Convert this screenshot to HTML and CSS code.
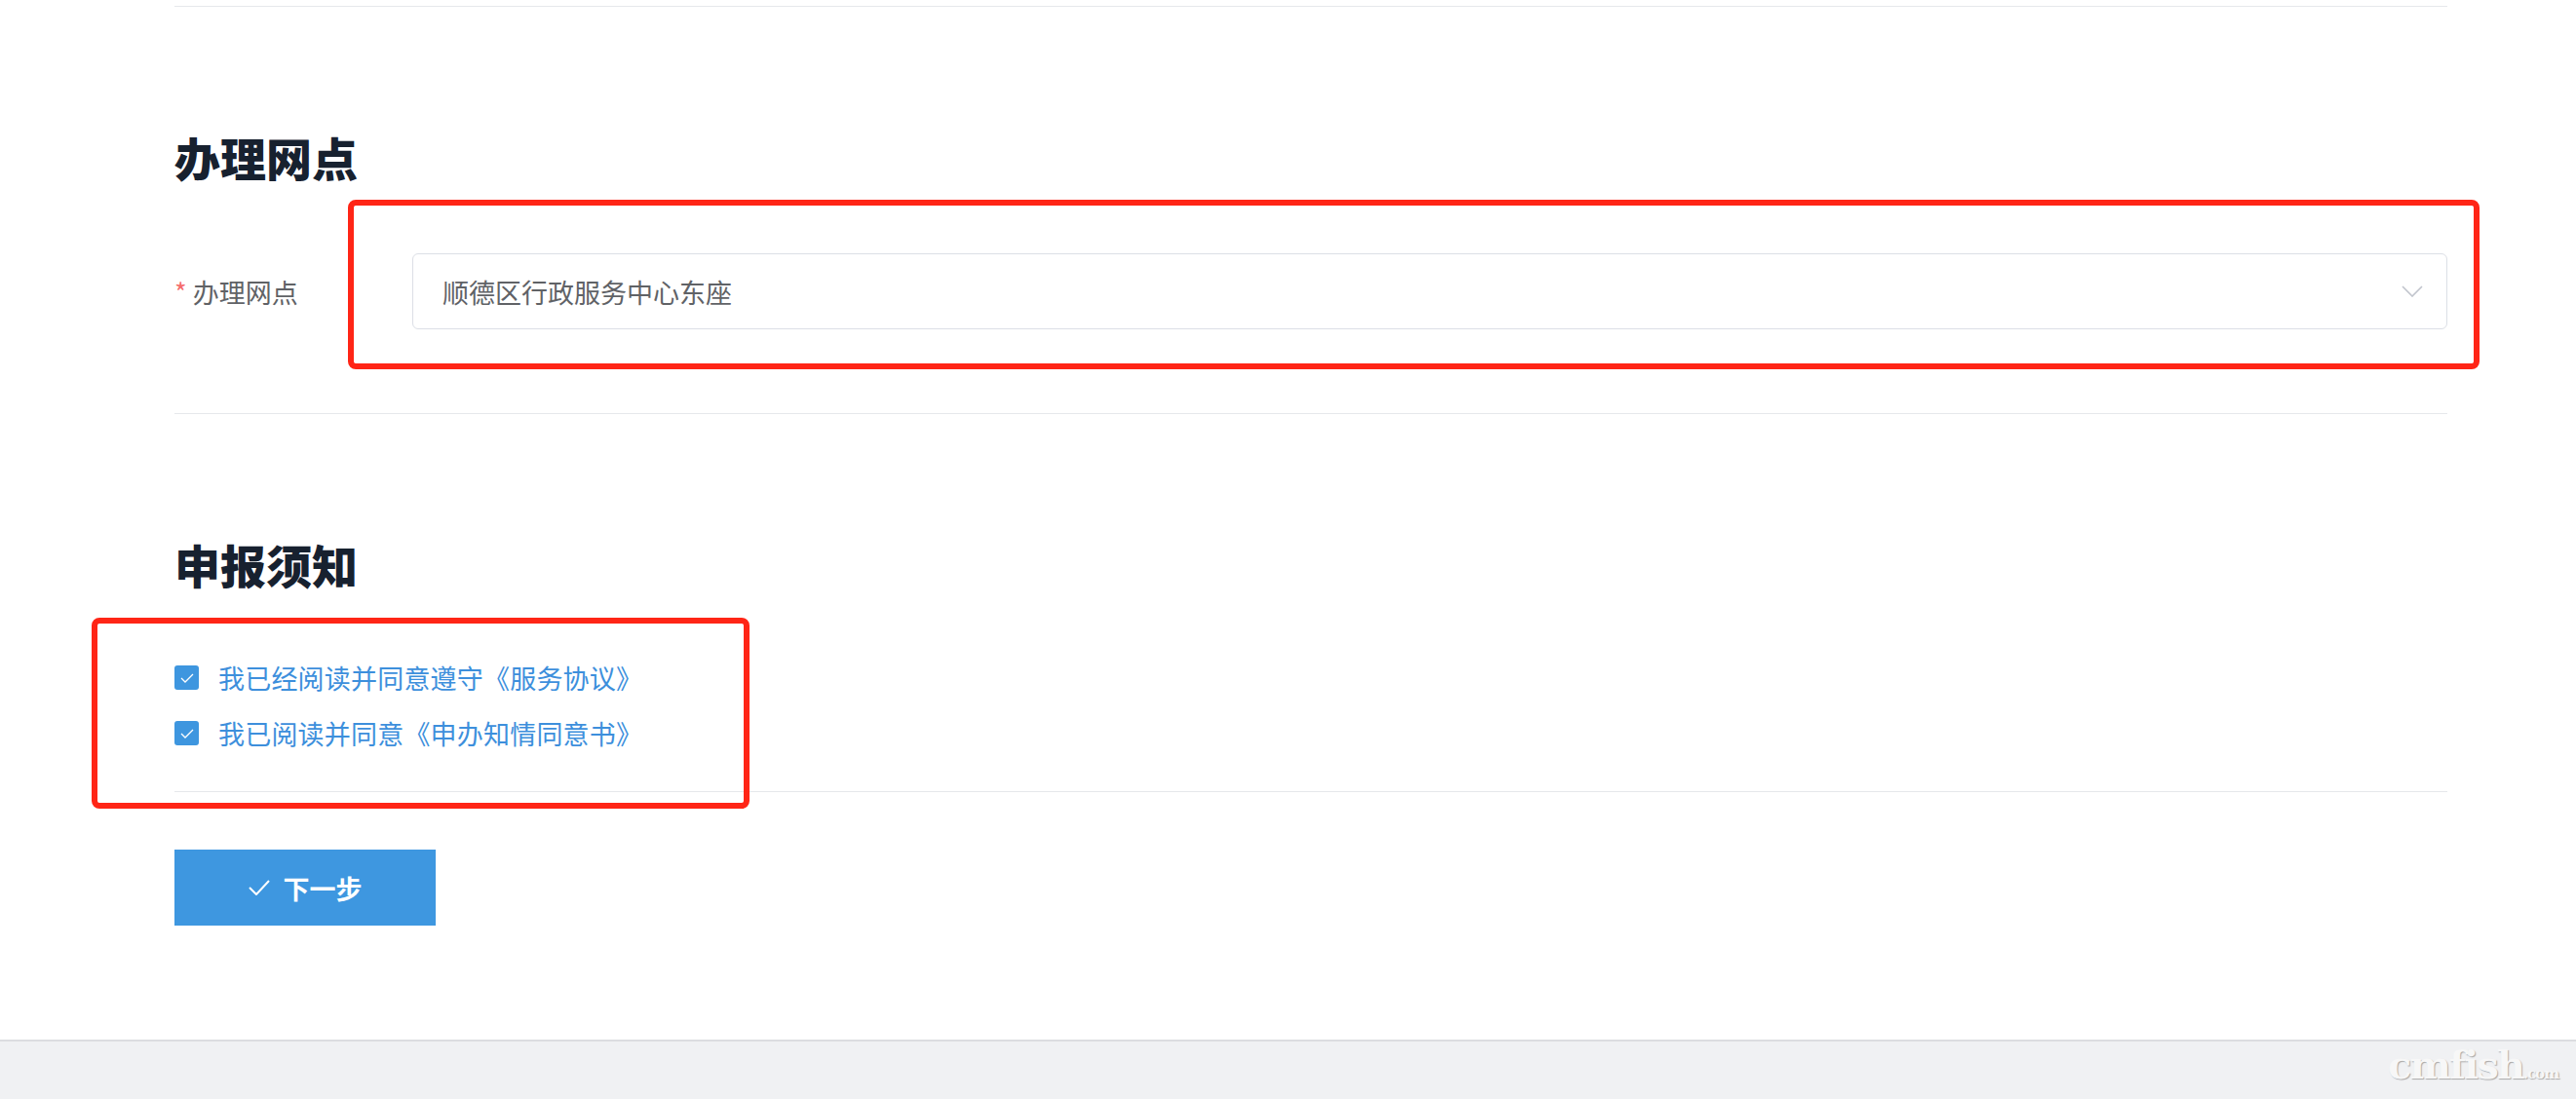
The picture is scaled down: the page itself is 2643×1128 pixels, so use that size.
FILE: index.html
```html
<!DOCTYPE html>
<html lang="zh-CN">
<head>
  <meta charset="UTF-8" />
  <title>办理网点</title>
  <link rel="stylesheet" href="styles.css">
</head>
<body>
  <div class="page">
    <div class="divider first"></div>

    <section class="block">
      <h2>办理网点</h2>
      <div class="form-row">
        <label class="label"><span class="req">*</span> 办理网点</label>
        <div class="select">
          <span>顺德区行政服务中心东座</span>
          <svg class="arrow" width="22" height="12" viewBox="0 0 22 12"><path d="M1 1 L11 11 L21 1" fill="none" stroke="#c0c4cc" stroke-width="1.6"/></svg>
        </div>
        <div class="mark mark-site"></div>
      </div>
    </section>

    <div class="divider"></div>

    <section class="block">
      <h2>申报须知</h2>
      <div class="agree">
        <label class="check">
          <span class="box"><svg width="14" height="10" viewBox="0 0 14 10"><path d="M1 5 L5 9 L13 1" fill="none" stroke="#fff" stroke-width="1.3"/></svg></span>
          我已经阅读并同意遵守《服务协议》
        </label>
        <label class="check">
          <span class="box"><svg width="14" height="10" viewBox="0 0 14 10"><path d="M1 5 L5 9 L13 1" fill="none" stroke="#fff" stroke-width="1.3"/></svg></span>
          我已阅读并同意《申办知情同意书》
        </label>
        <div class="mark mark-agree"></div>
      </div>
    </section>

    <div class="divider"></div>

    <button class="btn-next">
      <svg width="22" height="16" viewBox="0 0 22 16"><path d="M1 8 L8 15 L21 1" fill="none" stroke="#fff" stroke-width="2"/></svg>
      下一步
    </button>
  </div>

  <footer class="footer">
    <span class="wm">cmfish<small>.com</small></span>
  </footer>
</body>
</html>
```

FILE: styles.css
```css
* { margin: 0; padding: 0; box-sizing: border-box; }
html, body {
  background: #fff;
  font-family: "Noto Sans CJK SC", "Noto Sans", sans-serif;
  color: #606266;
}
.page {
  width: 2332px;
  margin-left: 179px;
  padding-top: 6px;
  padding-bottom: 117px;
}
.divider {
  height: 1px;
  background: #e6e8eb;
}
.block h2 {
  font-size: 47px;
  line-height: 56px;
  font-weight: 900;
  color: #17212f;
  margin-top: 126px;
}
.form-row {
  position: relative;
  display: flex;
  align-items: center;
  margin-top: 71px;
  margin-bottom: 86px;
}
.label {
  width: 244px;
  font-size: 27px;
  color: #606266;
}
.req { color: #f56c6c; }
.select {
  flex: 1;
  height: 78px;
  border: 1px solid #dcdfe6;
  border-radius: 6px;
  display: flex;
  align-items: center;
  justify-content: space-between;
  padding: 0 24px 0 30px;
  font-size: 27px;
  color: #606266;
}
.agree {
  position: relative;
  margin-top: 60px;
  margin-bottom: 31px;
}
.check {
  display: flex;
  align-items: center;
  height: 57px;
  font-size: 27px;
  letter-spacing: 0.2px;
  color: #3d8fdc;
}
.box {
  width: 25px;
  height: 25px;
  border-radius: 3px;
  background: #3e96df;
  display: flex;
  align-items: center;
  justify-content: center;
  margin-right: 20px;
}
.btn-next {
  margin-top: 59px;
  width: 268px;
  height: 78px;
  border: none;
  background: #3e97e0;
  color: #fff;
  font-family: inherit;
  font-size: 27px;
  font-weight: 700;
  display: flex;
  align-items: center;
  justify-content: center;
  gap: 14px;
}
.mark {
  position: absolute;
  border: 6px solid #ff2516;
  border-radius: 8px;
}
.mark-site {
  left: 178px;
  right: -33px;
  top: -55px;
  bottom: -41px;
}
.mark-agree {
  left: -85px;
  width: 675px;
  top: -33px;
  height: 196px;
}
.footer {
  height: 63px;
  background: #f0f1f3;
  border-top: 2px solid #dcdde0;
  display: flex;
  justify-content: flex-end;
  align-items: flex-end;
  padding: 0 18px 6px 0;
}
.wm {
  font-family: "DejaVu Serif", serif;
  font-weight: 700;
  font-size: 40px;
  line-height: 44px;
  color: #f7f7f7;
  text-shadow: 1px 1px 1px #a9a9a9;
  letter-spacing: -2px;
}
.wm small { font-size: 15px; letter-spacing: -1px; }
```
